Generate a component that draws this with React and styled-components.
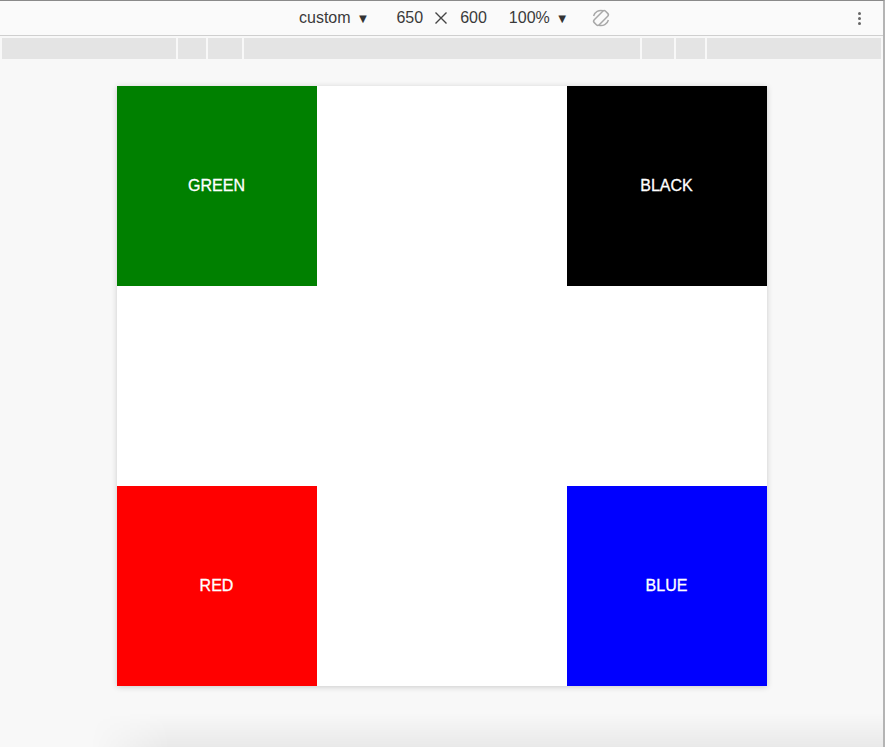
import React from 'react'
import styled, { createGlobalStyle } from 'styled-components'

// global
const Global = createGlobalStyle`
  html, body {
    margin: 0;
    padding: 0;
    background: #f8f8f8;
  }
  body {
    font-family: "Liberation Sans", Arial, sans-serif;
  }
`

// styles
const Frame = styled.div`
  position: relative;
  height: 747px;
  width: 885px;
  box-sizing: border-box;
  border-top: 1px solid #8a8a8a;
  border-right: 2px solid #b4b4b4;
  display: flex;
  flex-direction: column;
  overflow: hidden;
`

const Toolbar = styled.div`
  height: 34px;
  background: #fafafa;
  border-bottom: 1px solid #cfcfcf;
  display: flex;
  align-items: center;
  padding-left: 299px;
  position: relative;
  font-family: "Liberation Sans", Arial, sans-serif;
  font-size: 16px;
  color: #3a3a3a;
`

const ToolItem = styled.span`
  display: inline-flex;
  align-items: center;
  margin-left: ${props => props.gap || 0}px;
  gap: 6px;
`

const Times = styled.svg`
  margin-left: ${props => props.gap || 0}px;
  display: block;
`

const Caret = styled.span`
  font-size: 13px;
  color: #333;
`

const Kebab = styled.div`
  position: absolute;
  right: 22px;
  top: 11px;
  display: flex;
  flex-direction: column;
  gap: 2px;

  span {
    width: 3px;
    height: 3px;
    border-radius: 50%;
    background: #666;
  }
`

const Ruler = styled.div`
  margin: 2px 2px 0 2px;
  height: 21px;
  display: flex;
  gap: 2px;
`

const RulerCell = styled.div`
  background: #e4e4e4;
  width: ${props => props.w ? `${props.w}px` : 'auto'};
  flex: ${props => props.w ? '0 0 auto' : 1};
`

const Canvas = styled.div`
  flex: 1;
  display: flex;
  justify-content: center;
  padding-top: 27px;
  position: relative;

  &::after {
    content: '';
    position: absolute;
    left: 90px;
    right: 0;
    bottom: 0;
    height: 34px;
    background: linear-gradient(to bottom, rgba(0,0,0,0), rgba(0,0,0,0.06));
    -webkit-mask-image: linear-gradient(to right, transparent, #000 80px);
    mask-image: linear-gradient(to right, transparent, #000 80px);
  }
`

const Device = styled.div`
  width: 650px;
  height: 600px;
  background: #fff;
  box-shadow: 0 1px 6px rgba(0, 0, 0, 0.18);
  display: flex;
  flex-direction: column;
  justify-content: space-between;
`

const Row = styled.div`
  display: flex;
  justify-content: space-between;
`

const Square = styled.div`
  width: 200px;
  height: 200px;
  background: ${props => props.color};
  color: #fff;
  display: flex;
  align-items: center;
  justify-content: center;
  font-family: "Liberation Sans", Arial, sans-serif;
  font-size: 16px;
  -webkit-text-stroke: 0.3px #fff;
`

const EdgeMark = styled.div`
  position: absolute;
  right: -2px;
  top: 380px;
  width: 2px;
  height: 22px;
  background: #4a7fd4;
`

const RotateIcon = () => (
  <svg width="20" height="20" viewBox="0 0 20 20" fill="none" stroke="#a8a8a8" strokeWidth="1.5">
    <rect x="6.5" y="2" width="7" height="16" rx="2" transform="rotate(45 10 10)" />
    <path d="M2.6 8 A7.6 7.6 0 0 1 12 2.7" />
    <path d="M17.4 12 A7.6 7.6 0 0 1 8 17.3" />
  </svg>
)

//render
const App = () => (
  <>
    <Global />
    <Frame>
      <Toolbar>
        <ToolItem>custom <Caret>▼</Caret></ToolItem>
        <ToolItem gap={27}>650</ToolItem>
        <Times gap={11} width="14" height="14" viewBox="0 0 14 14" stroke="#444" strokeWidth="1.4">
          <path d="M1.5 1.5 L12.5 12.5 M12.5 1.5 L1.5 12.5" />
        </Times>
        <ToolItem gap={12}>600</ToolItem>
        <ToolItem gap={22}>100% <Caret>▼</Caret></ToolItem>
        <ToolItem gap={22}><RotateIcon /></ToolItem>
        <Kebab><span /><span /><span /></Kebab>
      </Toolbar>
      <Ruler>
        <RulerCell w={174} />
        <RulerCell w={28} />
        <RulerCell w={34} />
        <RulerCell w={396} />
        <RulerCell w={32} />
        <RulerCell w={29} />
        <RulerCell />
      </Ruler>
      <Canvas>
        <Device>
          <Row>
            <Square color="#008000">GREEN</Square>
            <Square color="#000000">BLACK</Square>
          </Row>
          <Row>
            <Square color="#ff0000">RED</Square>
            <Square color="#0000ff">BLUE</Square>
          </Row>
        </Device>
      </Canvas>
      <EdgeMark />
    </Frame>
  </>
)

export default App
